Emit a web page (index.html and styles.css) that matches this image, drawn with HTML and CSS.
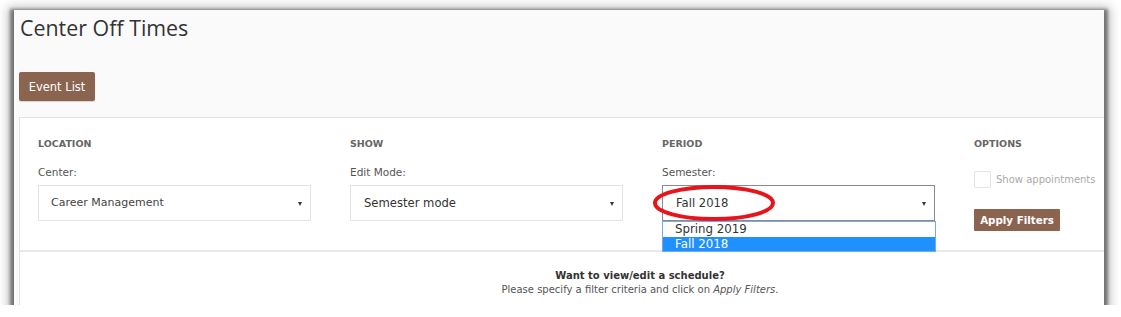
FILE: index.html
```html
<!DOCTYPE html>
<html>
<head>
<meta charset="utf-8">
<link rel="stylesheet" href="styles.css">
</head>
<body>
<div class="shot">
  <h1 class="title">Center Off Times</h1>
  <button class="btn btn-event">Event List</button>
  <div class="panel">
    <div class="filters">
      <div class="col">
        <div class="head">LOCATION</div>
        <div class="label">Center:</div>
        <div class="select"><span>Career Management</span><i class="caret"></i></div>
      </div>
      <div class="col">
        <div class="head">SHOW</div>
        <div class="label">Edit Mode:</div>
        <div class="select select-lg"><span>Semester mode</span><i class="caret"></i></div>
      </div>
      <div class="col">
        <div class="head">PERIOD</div>
        <div class="label">Semester:</div>
        <div class="select select-lg select-open"><span>Fall 2018</span><i class="caret"></i>
          <svg class="ring" width="126" height="40" viewBox="0 0 126 40"><ellipse cx="63" cy="19" rx="59" ry="16" fill="none" stroke="#e8141b" stroke-width="4"/></svg>
          <ul class="options">
            <li>Spring 2019</li>
            <li class="sel">Fall 2018</li>
          </ul>
        </div>
      </div>
      <div class="col col-opt">
        <div class="head">OPTIONS</div>
        <label class="check"><span class="box"></span>Show appointments</label>
        <button class="btn btn-apply">Apply Filters</button>
      </div>
    </div>
    <div class="message">
      <div class="msg-title">Want to view/edit a schedule?</div>
      <div class="msg-text">Please specify a filter criteria and click on <em>Apply Filters</em>.</div>
    </div>
  </div>
</div>
</body>
</html>
```
FILE: styles.css
```css
html, body {
  margin: 0;
  padding: 0;
  background: #fff;
}
body {
  font-family: "DejaVu Sans", Verdana, sans-serif;
  color: #333;
}
.shot {
  margin: 10px 0 0 14px;
  width: 1090px;
  height: 295px;
  background: #fafafa;
  box-shadow: 0 3px 3px 4px rgba(0, 0, 0, 0.42), 0 3px 10px 6px rgba(0, 0, 0, 0.25);
  overflow: hidden;
  padding-left: 5px;
  box-sizing: border-box;
}
.title {
  margin: 0;
  padding-top: 4px;
  height: 58px;
  font-family: "Open Sans", "Noto Sans", sans-serif;
  font-weight: 400;
  font-size: 21.4px;
  line-height: 28px;
  color: #333;
  padding-left: 1px;
}
.btn {
  display: block;
  border: 0;
  border-radius: 2px;
  background: #8b6450;
  color: #fff;
  font-family: "DejaVu Sans", Verdana, sans-serif;
  padding: 0;
}
.btn-event {
  width: 76px;
  height: 29px;
  font-size: 11.5px;
  margin-bottom: 16px;
  box-shadow: 0 1px 1px rgba(0,0,0,.15);
}
.panel {
  background: #fff;
  border: 1px solid #e2e2e2;
  border-right: 0;
  width: 1240px;
  height: 200px;
}
.filters {
  display: grid;
  grid-template-columns: 273px 273px 273px 200px;
  column-gap: 39px;
  padding: 19px 0 0 18px;
  height: 113px;
  border-bottom: 2px solid #e8e8e8;
}
.head {
  font-size: 9.5px;
  font-weight: bold;
  color: #666;
  line-height: 14px;
  height: 28px;
}
.label {
  font-size: 10.5px;
  color: #555;
  line-height: 14px;
  height: 20px;
}
.select {
  position: relative;
  height: 36px;
  box-sizing: border-box;
  border: 1px solid #e3e3e3;
  background: #fff;
  font-size: 11px;
  color: #444;
  padding-left: 12px;
  line-height: 34px;
}
.select-lg {
  font-size: 11.6px;
  color: #333;
}
.select-lg span { padding-left: 1px; }
.select-open {
  border-color: #8a8a8a;
}
.caret {
  position: absolute;
  right: 8px;
  top: 16px;
  width: 0;
  height: 0;
  border-left: 2.5px solid transparent;
  border-right: 2.5px solid transparent;
  border-top: 4px solid #333;
}
.ring {
  position: absolute;
  left: -12px;
  top: -2px;
}
.options {
  position: absolute;
  left: -1px;
  top: 35px;
  width: 274px;
  margin: 0;
  padding: 0;
  list-style: none;
  background: #fff;
  border: 1px solid #7aa7e6;
  box-sizing: border-box;
  font-size: 11.8px;
  line-height: 15px;
  color: #333;
  z-index: 2;
}
.options li {
  padding-left: 12px;
  height: 14.5px;
}
.options li.sel {
  background: #1e90ff;
  color: #fff;
}
.check {
  display: flex;
  align-items: center;
  margin-top: 6px;
  font-size: 10px;
  color: #aaa;
  height: 17px;
}
.box {
  width: 15px;
  height: 15px;
  border: 1px solid #e2e2e2;
  border-radius: 2px;
  margin-right: 5px;
  background: #fff;
}
.btn-apply {
  margin-top: 21px;
  width: 86px;
  height: 22px;
  font-size: 10.3px;
  font-weight: bold;
  border-radius: 1px;
}
.message {
  text-align: center;
  width: 1240px;
  padding-top: 17px;
  font-size: 10px;
  line-height: 14px;
}
.msg-title {
  font-weight: bold;
  color: #333;
}
.msg-text {
  color: #555;
}
```
